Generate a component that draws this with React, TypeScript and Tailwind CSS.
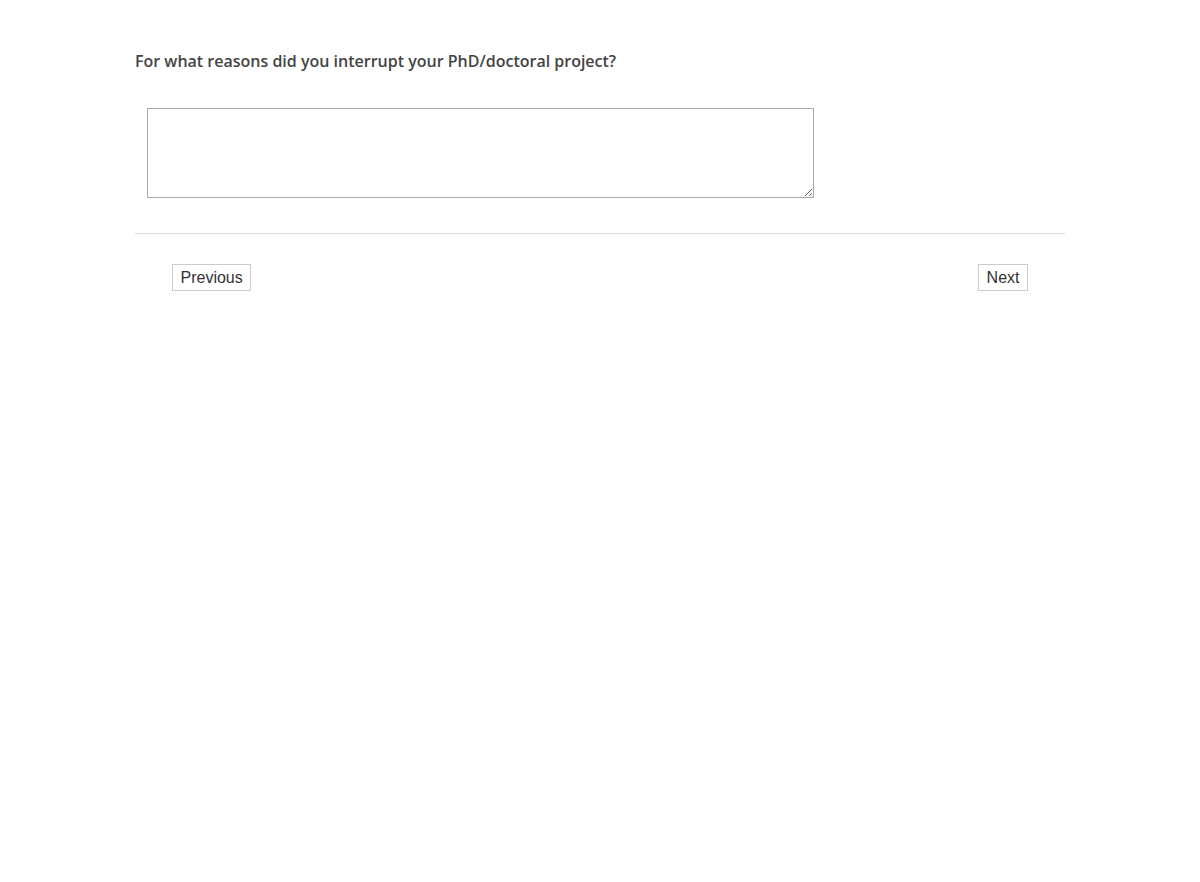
import React, { useState } from 'react';

export default function App() {
  const [answer, setAnswer] = useState('');

  return (
    <div className="min-h-screen bg-white">
      <div className="w-[930px] mx-auto pt-[50px]">
        {/* Question */}
        <h2 className="text-[16px] leading-[22px] font-semibold text-[#444444] font-['Open_Sans',sans-serif]">
          For what reasons did you interrupt your PhD/doctoral project?
        </h2>

        <div className="pt-[36px] pl-[12px]">
          <textarea
            value={answer}
            onChange={(e) => setAnswer(e.target.value)}
            className="block w-[667px] h-[90px] border border-[#a9a9a9] bg-white resize-y outline-none p-1 text-[14px] font-['Liberation_Sans',sans-serif]"
          />
        </div>

        <hr className="mt-[35px] border-0 border-t border-[#dddddd]" />

        {/* Navigation */}
        <div className="flex justify-between px-[37px] pt-[30px]">
          <button className="h-[27px] px-[7.5px] border border-[#cccccc] bg-white text-[16px] text-[#333333] font-['Liberation_Sans',sans-serif]">
            Previous
          </button>
          <button className="h-[27px] px-[7.5px] border border-[#cccccc] bg-white text-[16px] text-[#333333] font-['Liberation_Sans',sans-serif]">
            Next
          </button>
        </div>
      </div>
    </div>
  );
}
